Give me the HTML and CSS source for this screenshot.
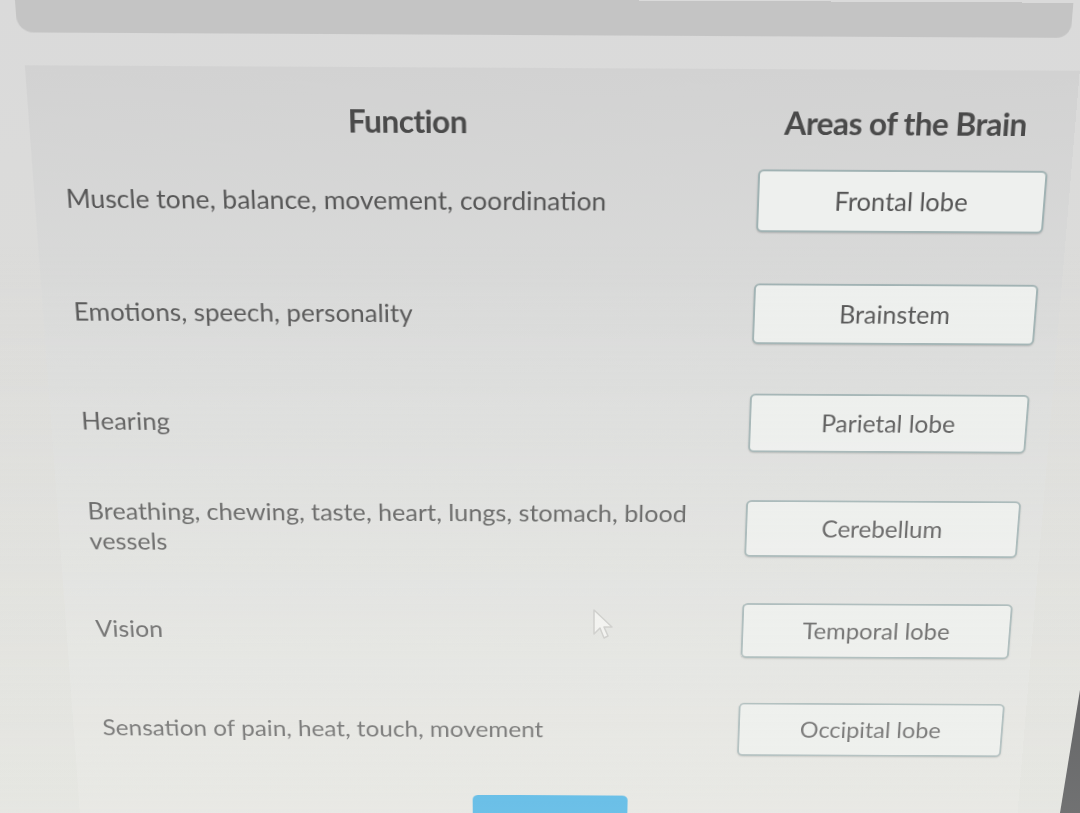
FILE: index.html
```html
<!DOCTYPE html>
<html lang="en">
<head>
<meta charset="UTF-8">
<meta name="viewport" content="width=device-width, initial-scale=1.0">
<title>Brain Areas Matching</title>
<link rel="stylesheet" href="styles.css">
</head>
<body>
<div class="screen">
  <div class="top-bar"></div>
  <div class="panel">
    <div class="titles">
      <h2 class="col-title">Function</h2>
      <h2 class="col-title">Areas of the Brain</h2>
    </div>
    <div class="match-grid">
      <div class="function">Muscle tone, balance, movement, coordination</div>
      <div class="area">Frontal lobe</div>

      <div class="function">Emotions, speech, personality</div>
      <div class="area">Brainstem</div>

      <div class="function">Hearing</div>
      <div class="area">Parietal lobe</div>

      <div class="function">Breathing, chewing, taste, heart, lungs, stomach, blood vessels</div>
      <div class="area">Cerebellum</div>

      <div class="function">Vision</div>
      <div class="area">Temporal lobe</div>

      <div class="function">Sensation of pain, heat, touch, movement</div>
      <div class="area">Occipital lobe</div>
    </div>
    <div class="actions">
      <button class="submit-button" type="button"></button>
    </div>
  </div>
</div>

<svg class="cursor" width="22" height="34" viewBox="0 0 22 34">
  <path d="M2 2 L2 26 L8 20 L12 30 L16 28 L12 19 L20 19 Z" fill="#f4f4f2" stroke="#c9c9c6" stroke-width="1.5" stroke-linejoin="round"/>
</svg>
<div class="bezel"></div>
<div class="glare"></div>
</body>
</html>
```
FILE: styles.css
```css
body {
  margin: 0;
  height: 813px;
  overflow: hidden;
  background: linear-gradient(to bottom, #dadada, #dcdcda 40%, #e2e3de);
  font-family: Lato, "Open Sans", sans-serif;
  position: relative;
}
.screen {
  transform-origin: 554px 68px;
  transform: perspective(1000px) rotateX(-8.5deg) rotate(0.3deg);
}
.top-bar {
  height: 35px;
  margin: 0 12px 0 20px;
  background-color: #c4c4c4;
  border-radius: 0 0 14px 16px;
}
.panel {
  margin: 33px 0 0 25px;
  padding: 35px 24px 60px 32px;
  background: linear-gradient(to bottom, #d2d2d2, #dcdddc 35%, #e3e4e1 70%, #e7e7e2);
}
.titles,
.match-grid {
  display: grid;
  grid-template-columns: 703px 294px;
  column-gap: 2px;
}
.titles {
  margin-bottom: 28px;
}
.match-grid {
  grid-auto-rows: 66px;
  row-gap: 55px;
  align-items: center;
}
.col-title {
  margin: 0;
  line-height: 40px;
  text-align: center;
  font-size: 32px;
  font-weight: 700;
  letter-spacing: -0.6px;
  color: #4a4a4a;
}
.col-title:first-child {
  margin-right: 4px;
}
.function {
  max-width: 660px;
  font-size: 27px;
  line-height: 35px;
  color: #575757;
}
.area {
  height: 62px;
  display: flex;
  align-items: center;
  justify-content: center;
  background-color: #eef0ee;
  border: 2px solid #a0b2b3;
  border-radius: 6px;
  box-shadow: 0 1px 2px rgba(0, 0, 0, 0.18);
  font-size: 26px;
  color: #555;
}
.actions {
  display: flex;
  justify-content: center;
  margin-top: 51px;
  padding-right: 6px;
}
.submit-button {
  width: 174px;
  height: 48px;
  border: none;
  border-radius: 6px;
  background-color: #34ace6;
}
.cursor {
  position: absolute;
  left: 592px;
  top: 608px;
}
.bezel {
  position: absolute;
  right: 0;
  top: 690px;
  width: 20px;
  height: 123px;
  background-color: #3a3b3e;
  clip-path: polygon(100% 0, 100% 100%, 0 100%);
}
.glare {
  position: absolute;
  inset: 0;
  pointer-events: none;
  background: linear-gradient(to bottom, rgba(240, 240, 236, 0) 30%, rgba(240, 240, 236, 0.16) 65%, rgba(240, 240, 236, 0.3));
}
```
